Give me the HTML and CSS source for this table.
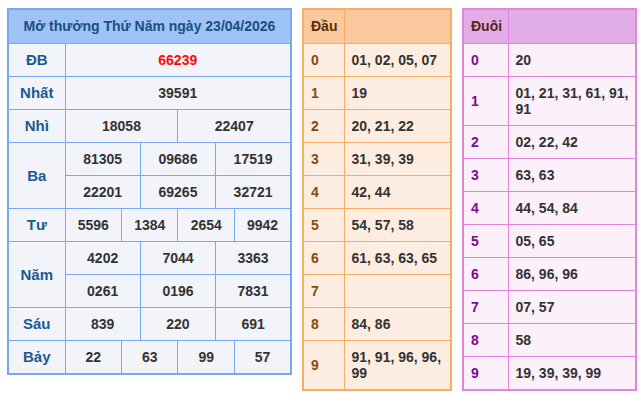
FILE: index.html
```html
<!DOCTYPE html>
<html lang="vi">
<head>
<meta charset="utf-8">
<link rel="stylesheet" href="styles.css">
</head>
<body>
<div class="wrap">
  <table class="kq">
    <colgroup>
      <col class="c-label">
      <col><col><col><col><col><col><col><col><col><col><col><col>
    </colgroup>
    <thead>
      <tr><th colspan="13" class="title">Mở thưởng Thứ Năm ngày 23/04/2026</th></tr>
    </thead>
    <tbody>
      <tr><td class="lbl">ĐB</td><td colspan="12" class="db">66239</td></tr>
      <tr><td class="lbl">Nhất</td><td colspan="12">39591</td></tr>
      <tr><td class="lbl">Nhì</td><td colspan="6">18058</td><td colspan="6">22407</td></tr>
      <tr><td class="lbl" rowspan="2">Ba</td><td colspan="4">81305</td><td colspan="4">09686</td><td colspan="4">17519</td></tr>
      <tr><td colspan="4">22201</td><td colspan="4">69265</td><td colspan="4">32721</td></tr>
      <tr><td class="lbl">Tư</td><td colspan="3">5596</td><td colspan="3">1384</td><td colspan="3">2654</td><td colspan="3">9942</td></tr>
      <tr><td class="lbl" rowspan="2">Năm</td><td colspan="4">4202</td><td colspan="4">7044</td><td colspan="4">3363</td></tr>
      <tr><td colspan="4">0261</td><td colspan="4">0196</td><td colspan="4">7831</td></tr>
      <tr><td class="lbl">Sáu</td><td colspan="4">839</td><td colspan="4">220</td><td colspan="4">691</td></tr>
      <tr><td class="lbl">Bảy</td><td colspan="3">22</td><td colspan="3">63</td><td colspan="3">99</td><td colspan="3">57</td></tr>
    </tbody>
  </table>

  <table class="lt dau">
    <colgroup><col class="c-k"><col></colgroup>
    <thead><tr><th>Đầu</th><th></th></tr></thead>
    <tbody>
      <tr><td class="k">0</td><td>01, 02, 05, 07</td></tr>
      <tr><td class="k">1</td><td>19</td></tr>
      <tr><td class="k">2</td><td>20, 21, 22</td></tr>
      <tr><td class="k">3</td><td>31, 39, 39</td></tr>
      <tr><td class="k">4</td><td>42, 44</td></tr>
      <tr><td class="k">5</td><td>54, 57, 58</td></tr>
      <tr><td class="k">6</td><td>61, 63, 63, 65</td></tr>
      <tr><td class="k">7</td><td></td></tr>
      <tr><td class="k">8</td><td>84, 86</td></tr>
      <tr><td class="k">9</td><td>91, 91, 96, 96, 99</td></tr>
    </tbody>
  </table>

  <table class="lt duoi">
    <colgroup><col class="c-k"><col></colgroup>
    <thead><tr><th>Đuôi</th><th></th></tr></thead>
    <tbody>
      <tr><td class="k">0</td><td>20</td></tr>
      <tr><td class="k">1</td><td>01, 21, 31, 61, 91, 91</td></tr>
      <tr><td class="k">2</td><td>02, 22, 42</td></tr>
      <tr><td class="k">3</td><td>63, 63</td></tr>
      <tr><td class="k">4</td><td>44, 54, 84</td></tr>
      <tr><td class="k">5</td><td>05, 65</td></tr>
      <tr><td class="k">6</td><td>86, 96, 96</td></tr>
      <tr><td class="k">7</td><td>07, 57</td></tr>
      <tr><td class="k">8</td><td>58</td></tr>
      <tr><td class="k">9</td><td>19, 39, 39, 99</td></tr>
    </tbody>
  </table>
</div>
</body>
</html>
```

FILE: styles.css
```css
html, body {
  margin: 0;
  padding: 0;
  background: #ffffff;
}
body {
  padding: 8px 0 0 7px;
  font-family: "Liberation Sans", Arial, sans-serif;
  font-size: 14px;
  font-weight: bold;
  color: #333333;
}
.wrap {
  display: flex;
  align-items: flex-start;
  gap: 10px;
}
table {
  border-collapse: collapse;
  table-layout: fixed;
}
td, th {
  padding: 8px 0;
  line-height: 16px;
  font-weight: bold;
  vertical-align: middle;
}

/* Results table */
.kq {
  width: 285px;
  border: 2px solid #78a8f2;
  background: #f2f4f9;
}
.kq .c-label { width: 57px; }
.kq td, .kq th {
  border: 1px solid #78a8f2;
  text-align: center;
}
.kq .title {
  background: #9fc3f7;
  color: #1b4f7e;
  padding: 8px 0 9px;
}
.kq .lbl {
  color: #1a5a93;
  font-size: 15px;
}
.kq .db { color: #ff0a0a; }

/* Loto tables */
.lt td, .lt th {
  text-align: left;
  padding: 8px 6px 8px 7px;
}
.lt thead th { padding-bottom: 9px; }

.dau {
  width: 150px;
  border: 2px solid #f8ad66;
  background: #fdede1;
}
.dau .c-k { width: 41px; }
.dau td, .dau th { border: 1px solid #f8ad66; }
.dau thead th { background: #f9c99d; color: #5b2e0e; }
.dau .k { color: #8a4a0e; }

.duoi {
  width: 175px;
  border: 2px solid #e184e0;
  background: #fcf0fb;
}
.duoi .c-k { width: 45px; }
.duoi td, .duoi th { border: 1px solid #e184e0; }
.duoi thead th { background: #e2ade6; color: #5a2315; }
.duoi .k { color: #7f0a8e; }
```
